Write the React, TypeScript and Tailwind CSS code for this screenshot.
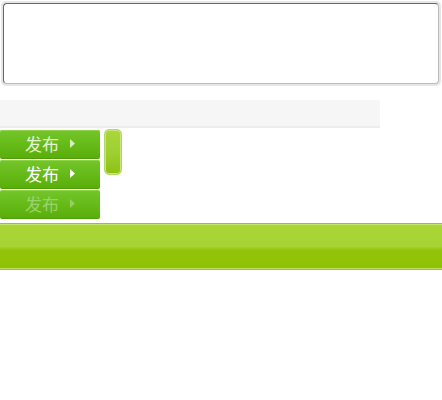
import React from "react";

const Arrow = ({ className }: { className: string }) => (
  <svg width="5" height="9" viewBox="0 0 5 9" className={className}>
    <path d="M0 0 L5 4.5 L0 9 Z" fill="currentColor" />
  </svg>
);

const PublishButton = (props: { text: string; arrow: string }) => {
  return (
    <button className="flex items-center justify-center w-[100px] h-[29px] rounded-[2px] bg-gradient-to-b from-[#74c52a] via-[#66bb18] to-[#5aae0a] border-b border-[#4f9e06] shadow-[inset_0_1px_0_#8fd24a] gap-[11px] pb-[2px]">
      <span className={"text-[17px] leading-none " + props.text} style={{ fontFamily: '"Noto Sans CJK SC", sans-serif' }}>
        发布
      </span>
      <Arrow className={props.arrow} />
    </button>
  );
};

export default function App() {
  return (
    <div className="w-[442px] h-[400px] bg-white" style={{ fontFamily: '"Noto Sans CJK SC", sans-serif' }}>
      <div className="pt-[1px] pl-[1px]">
        <div className="w-[440px] h-[85px] rounded-[5px] bg-[#e6e6e6] p-[2px]">
          <div className="w-full h-full rounded-[4px] bg-white border border-[#666] border-b-[#bbb] border-r-[#bbb]" />
        </div>
      </div>
      <div className="mt-[14px] w-[380px] h-[28px] bg-[#f6f6f6] border-b-2 border-[#ededed]" />
      <div className="flex flex-row gap-[4px] mt-[1px]">
        <div className="flex flex-col gap-[1px] pt-[1px]">
          <PublishButton text="text-[#e4f3d2]" arrow="text-[#d6eebd]" />
          <PublishButton text="text-white" arrow="text-white" />
          <PublishButton text="text-[#9bd26e]" arrow="text-[#93cf63]" />
        </div>
        <div className="w-[18px] h-[46px] rounded-[5px] border border-[#b3d866] bg-gradient-to-b from-[#a9d63c] via-[#9fd031] to-[#8dc10c] shadow-[inset_0_0_0_1px_#c7e57f]" />
      </div>
      <div className="mt-[4px] h-[47px] border-t border-b border-[#9fbf3c] bg-[linear-gradient(to_bottom,#a9d636_0%,#a6d433_50%,#93c40a_58%,#8fc206_100%)] shadow-[inset_0_1px_0_#c4e66a,inset_0_-1px_0_#c0e060]" />
    </div>
  );
}
